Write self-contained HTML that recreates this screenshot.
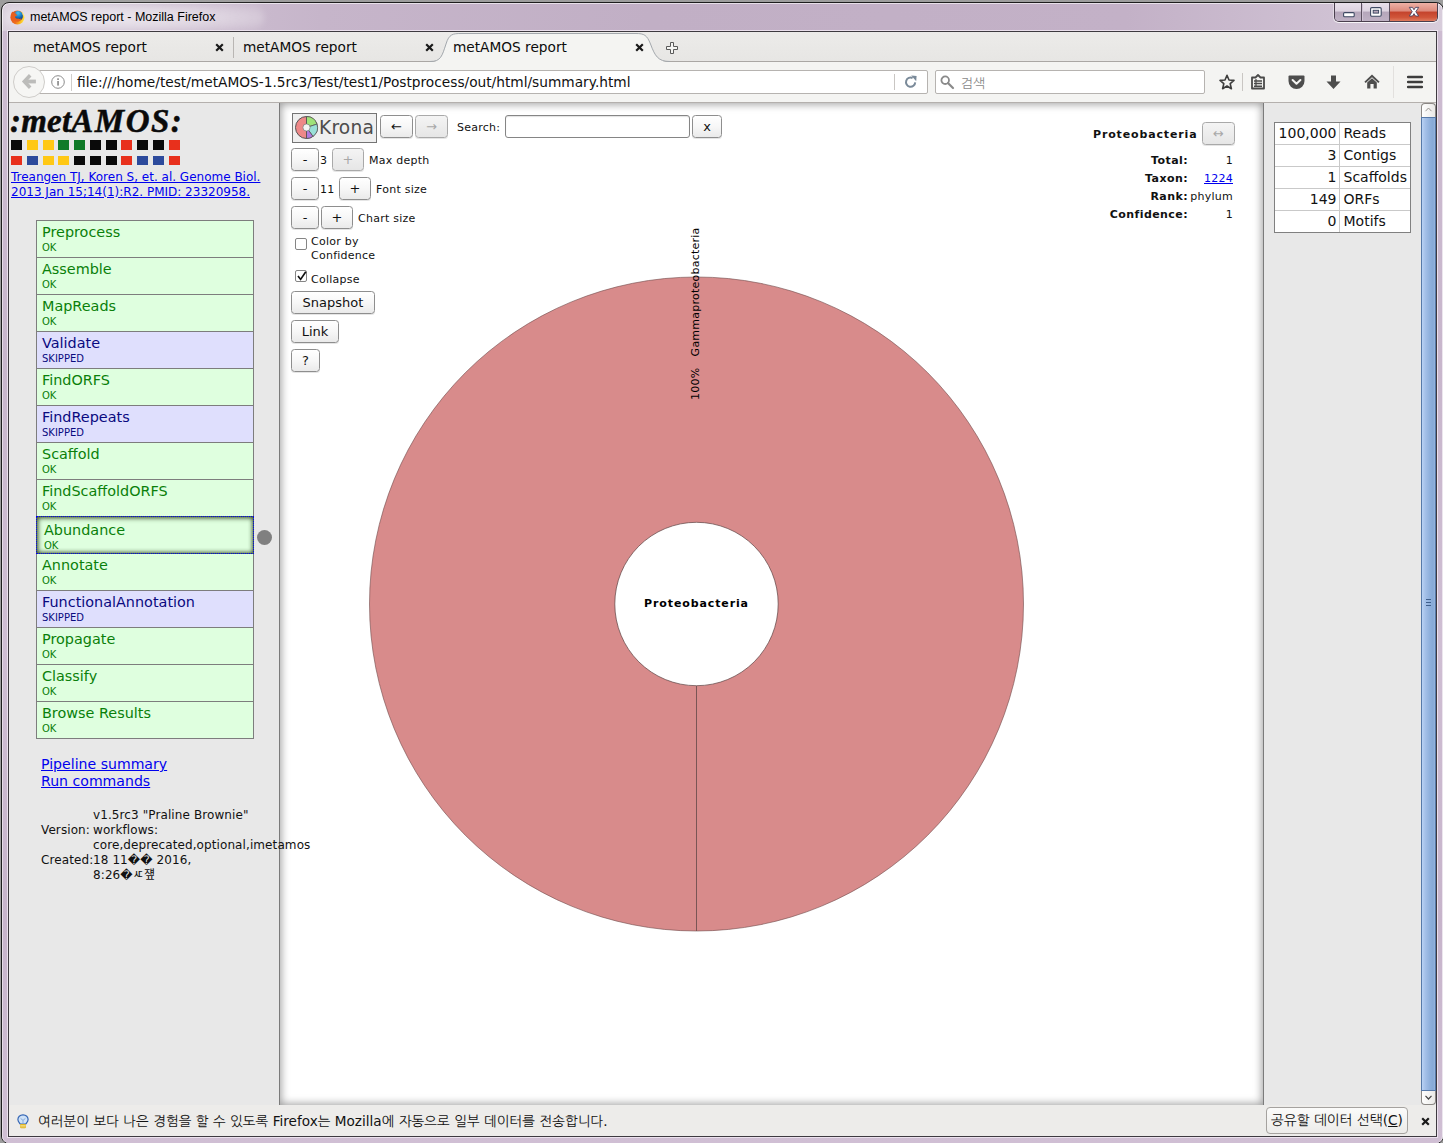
<!DOCTYPE html>
<html lang="ko">
<head>
<meta charset="utf-8">
<title>metAMOS report - Mozilla Firefox</title>
<style>
*{box-sizing:border-box;margin:0;padding:0}
html,body{width:1443px;height:1143px;overflow:hidden;background:#9d9d9d}
body{position:relative;font-family:"DejaVu Sans","Liberation Sans","NanumGothic",sans-serif;color:#000}
.abs{position:absolute}
/* window frame */
#frame{position:absolute;left:1px;top:2px;width:1443px;height:1142px;border:1px solid #1d1d1d;border-radius:8px;
 background:linear-gradient(90deg,#d9cfdc 0,#d2c6d6 60px,#c6b5ca 320px,#c1afc5 45%,#c3b1c7 78%,#d2c5d6 96%,#d8cddb 100%);box-shadow:inset 0 0 0 1px rgba(255,255,255,.6)}
#frameside{position:absolute;left:2px;top:31px;width:1441px;height:1112px;background:linear-gradient(180deg,#cdbcd1 0,#c8b6cc 30%,#cfbed3 55%,#c7b4cb 80%,#d0bfd4 100%);border-left:1px solid #e6dde8;border-right:1px solid #ece6ee;border-radius:0 0 7px 7px}
#titleglow{position:absolute;left:4px;top:4px;width:260px;height:27px;border-radius:14px;background:radial-gradient(ellipse at 45% 50%,rgba(255,255,255,.6) 0,rgba(255,255,255,.42) 45%,rgba(255,255,255,0) 100%);filter:blur(3px)}
#title{position:absolute;left:30px;top:9px;font:12.5px/17px "Liberation Sans","NanumGothic",sans-serif;color:#000;white-space:nowrap}
/* client area */
#client{position:absolute;left:8px;top:31px;width:1429px;height:1106px;border:1px solid #3e3a40;box-shadow:0 0 0 1px rgba(245,238,247,.75);background:#e8e8e8;overflow:hidden}

/* tab bar */
#tabbar{position:absolute;left:9px;top:32px;width:1427px;height:30px;background:linear-gradient(#ecebe9,#e7e6e4);border-bottom:1px solid #aaa7a4}
.tabtxt{position:absolute;top:39px;font-size:13.7px;line-height:17px;white-space:nowrap;color:#0c0c0c}
.tabx{position:absolute;top:43px;width:9px;height:9px}
#tabsep{position:absolute;left:233px;top:37px;width:1px;height:21px;background:#b9b6b3}
/* nav bar */
#navbar{position:absolute;left:9px;top:62px;width:1427px;height:41px;background:#f4f4f2;border-bottom:1px solid #b4b0ad}
#urlbar{position:absolute;left:36px;top:70px;width:892px;height:24px;background:#fff;border:1px solid #b6b3b0;border-radius:2px}
#urltext{position:absolute;left:77px;top:73px;font-size:13.73px;line-height:18px;white-space:nowrap;color:#111}
#backbtn{position:absolute;left:13px;top:65.8px;width:32px;height:32px;border-radius:50%;background:#f6f6f4;border:1px solid #cfcdca}
#searchbar{position:absolute;left:935px;top:70px;width:270px;height:24px;background:#fff;border:1px solid #b6b3b0;border-radius:2px}
#searchph{position:absolute;left:960.5px;top:74.5px;font:13.2px/18px "NanumGothic","Noto Sans CJK KR",sans-serif;color:#8a8a8a}
.vsep{position:absolute;width:1px;background:#c9c6c3}
svg{position:absolute;overflow:visible}

/* page panels */
#leftp{position:absolute;left:9px;top:103px;width:270px;height:1002px;background:#e8e8e8;overflow:hidden}
#div1{position:absolute;left:279px;top:103px;width:1px;height:1002px;background:#7b7b7b}
#centerp{position:absolute;left:280px;top:103px;width:983px;height:1002px;background:#fff;box-shadow:inset 0 0 8px 1px rgba(0,0,0,.40);overflow:hidden}
#div2{position:absolute;left:1263px;top:103px;width:1px;height:1002px;background:#7b7b7b}
#rightp{position:absolute;left:1264px;top:103px;width:157px;height:1002px;background:#e8e8e8}
#logo{position:absolute;left:10px;top:103px;font:italic bold 33px/36px "Liberation Serif","DejaVu Serif",serif;letter-spacing:0.2px;color:#0a0a0a;white-space:nowrap;-webkit-text-stroke:.5px #0a0a0a}
.sq{position:absolute;width:11px;height:10px}
#cite{position:absolute;left:11px;top:170px;font-size:12px;line-height:15px;color:#0000ee;text-decoration:underline;white-space:nowrap}
#steps{position:absolute;left:36px;top:220px;width:218px;height:519px;border:1px solid #7d7d7d;background:#7d7d7d}
.st{position:absolute;left:36px;width:218px;height:38px;border:1px solid #7d7d7d;background:#dfffdf;color:#0a800a}
.st.sk{background:#dfdffd;color:#0a0a80}
.st b{position:absolute;left:5px;top:3px;font-weight:normal;font-size:14.4px;line-height:17px;white-space:nowrap}
.st i{position:absolute;left:5px;top:21px;font-style:normal;font-size:10px;line-height:12px}
.st.sel{outline:1px dotted #0000ee;outline-offset:-1px;border-color:#4a6a4a;box-shadow:inset 1px 1px 5px rgba(20,40,0,.75),inset -1px -1px 4px rgba(20,40,0,.45)}
.st.sel{z-index:2}.st.sel b{left:7px;top:5px}.st.sel i{left:7px;top:23px}
#dot{position:absolute;left:257px;top:530px;width:15px;height:15px;border-radius:50%;background:#808080}
.lnk{position:absolute;left:41px;font-size:14.1px;line-height:17px;color:#0000ee;text-decoration:underline;white-space:nowrap}
.ver{position:absolute;font-family:"DejaVu Sans","Noto Sans CJK KR",sans-serif;letter-spacing:.1px;font-size:12px;line-height:15px;white-space:nowrap;color:#111}

/* krona */
.kb{position:absolute;height:23px;border:1px solid #8e8e8e;border-radius:3.5px;background:linear-gradient(#ffffff,#f7f7f7 50%,#eaeaea);box-shadow:0 1px 0 rgba(0,0,0,.10);font-size:13px;line-height:21px;text-align:center;color:#111}
.kb.dis{color:#a8a8a8;background:linear-gradient(#f4f4f4,#e6e6e6);border-color:#a9a9a9}
.kl{position:absolute;font-size:11px;line-height:14px;white-space:nowrap;color:#111;letter-spacing:.25px}
#kinput{position:absolute;left:505px;top:115px;width:185px;height:23px;border:1px solid #858585;border-radius:3px;background:#fff;box-shadow:inset 0 1px 1px rgba(0,0,0,.12)}
#klogo{position:absolute;left:292px;top:113px;width:85px;height:30px;border:1px solid #747474;background:#efefef}
#klogo span{position:absolute;left:26px;top:2px;font-size:18.6px;line-height:24px;color:#4c4c4c;letter-spacing:.2px}
.cb{position:absolute;left:295px;width:12px;height:12px;border:1px solid #858585;background:#fff;border-radius:2px}
.ib{font-weight:bold;text-align:right;letter-spacing:.42px}
/* right table */
#stats{position:absolute;left:1274px;top:122px;width:137px;height:111px;border:1px solid #808080;background:#fff}
.cell{position:absolute;height:21px;font-size:14px;line-height:21px;white-space:nowrap;color:#111}
/* scrollbar */
#sbar{position:absolute;left:1421px;top:103px;width:15px;height:1002px;background:#e8e8e8}
#sthumb{position:absolute;left:1421px;top:117px;width:15px;height:974px;border:1px solid #5679a8;background:linear-gradient(90deg,#b9d2f4 0,#a4c0e8 25%,#8fb0dc 60%,#86a9d6 85%,#98b6de 100%)}
.sbtn{position:absolute;left:1421px;width:15px;height:14px;border:1px solid #8a8784;background:linear-gradient(90deg,#ffffff,#e9e8e6);}
/* notification */
#notif{position:absolute;left:9px;top:1105px;width:1427px;height:31px;background:#edecea}
#notiftxt{position:absolute;left:38px;top:1111.5px;font:13.6px/18px "DejaVu Sans","NanumGothic",sans-serif;white-space:nowrap;color:#111}
#notifbtn{position:absolute;left:1266px;top:1107px;width:142px;height:27px;border:1px solid #a5a29f;border-radius:4px;background:linear-gradient(#fbfbfa,#ecebe9);font:13.7px/24px "DejaVu Sans","NanumGothic",sans-serif;text-align:center;white-space:nowrap;color:#111}

/* window controls */
#wc{position:absolute;left:1334px;top:3px;width:104px;height:19px;border:1px solid #4a3f4e;border-top:none;border-radius:0 0 5px 5px;overflow:hidden;box-shadow:0 1px 0 rgba(255,255,255,.5),1px 1px 0 rgba(255,255,255,.4),-1px 1px 0 rgba(255,255,255,.4)}
#wc div{position:absolute;top:0;height:18px}
.wcg{background:linear-gradient(#e9e1eb 0,#ddd3e0 45%,#b5a6ba 50%,#bfb1c4 100%)}
#wcx{background:linear-gradient(#eeb1a6 0,#dd8a7c 45%,#c4432c 50%,#d0553a 80%,#de7a5e 100%)}
</style>
</head>
<body>
<div id="frame"></div><div id="frameside"></div>
<div id="titleglow"></div>
<div id="title">metAMOS report - Mozilla Firefox</div>
<div id="client"></div>

<div id="tabbar"></div>
<svg id="acttab" style="left:430px;top:32px" width="245" height="31" viewBox="0 0 245 31">
 <path d="M0 30 C 11 30 12 24 16 12 C 19 2 23 1.5 31 1.5 L 206 1.5 C 214 1.5 217 3 220.5 12 C 225 24 228 30 240 30 L 245 31 L 0 31 Z" fill="#f4f4f2"/>
 <path d="M0 29.5 C 11 29.5 12 24 16 12 C 19 2 23 1.5 31 1.5 L 206 1.5 C 214 1.5 217 3 220.5 12 C 225 24 228 29.5 240 29.5" fill="none" stroke="#a3a8ad" stroke-width="1"/>
</svg>
<div class="tabtxt" style="left:33px">metAMOS report</div>
<div class="tabtxt" style="left:243px">metAMOS report</div>
<div class="tabtxt" style="left:453px">metAMOS report</div>
<svg class="tabx" style="left:215px" viewBox="0 0 9 9"><path d="M1.2 1.2 L7.8 7.8 M7.8 1.2 L1.2 7.8" stroke="#1a1a1a" stroke-width="2.2" stroke-linecap="butt"/></svg>
<svg class="tabx" style="left:425px" viewBox="0 0 9 9"><path d="M1.2 1.2 L7.8 7.8 M7.8 1.2 L1.2 7.8" stroke="#1a1a1a" stroke-width="2.2"/></svg>
<svg class="tabx" style="left:635px" viewBox="0 0 9 9"><path d="M1.2 1.2 L7.8 7.8 M7.8 1.2 L1.2 7.8" stroke="#1a1a1a" stroke-width="2.2"/></svg>
<div id="tabsep"></div>
<svg style="left:666px;top:42px" width="12" height="12" viewBox="0 0 12 12"><path d="M4.5 .5 H7.5 V4.5 H11.5 V7.5 H7.5 V11.5 H4.5 V7.5 H.5 V4.5 H4.5 Z" fill="#f6f6f4" stroke="#5a5a5a" stroke-width="1"/></svg>

<div id="navbar"></div>
<div id="urlbar"></div>
<div id="backbtn"></div>
<svg style="left:22px;top:74.3px" width="14" height="15" viewBox="0 0 14 15"><path d="M8.2 1.2 L2.3 7.5 L8.2 13.8" fill="none" stroke="#bcbcba" stroke-width="3.5" stroke-linejoin="miter"/><path d="M3.4 7.5 H13.9" stroke="#bcbcba" stroke-width="3.8"/></svg>
<svg style="left:51px;top:75px" width="14" height="14" viewBox="0 0 14 14"><circle cx="7" cy="7" r="6.3" fill="none" stroke="#8c8c8c" stroke-width="1"/><rect x="6.2" y="6" width="1.7" height="4.6" fill="#8c8c8c"/><rect x="6.2" y="3.3" width="1.7" height="1.7" fill="#8c8c8c"/></svg>
<div class="vsep" style="left:71px;top:74px;height:17px;background:#d0cecb"></div>
<div id="urltext">file:///home/test/metAMOS-1.5rc3/Test/test1/Postprocess/out/html/summary.html</div>
<div class="vsep" style="left:894px;top:74px;height:16px"></div>
<svg style="left:904px;top:75px" width="14" height="14" viewBox="0 0 14 14"><path d="M11.2 7.4 A4.6 4.6 0 1 1 8.6 3.0" fill="none" stroke="#7a8a99" stroke-width="2"/><path d="M7.2 0.6 L12.6 1.0 L12.2 6.2 Z" fill="#7a8a99"/></svg>
<div id="searchbar"></div>
<svg style="left:940px;top:75px" width="14" height="14" viewBox="0 0 14 14"><circle cx="5.2" cy="5.2" r="3.8" fill="none" stroke="#8a8a8a" stroke-width="1.8"/><path d="M8 8 L13 13" stroke="#8a8a8a" stroke-width="2.2" stroke-linecap="round"/></svg>
<div id="searchph">검색</div>
<!-- toolbar icons -->
<svg style="left:1219px;top:74px" width="16" height="16" viewBox="0 0 16 16"><path d="M8 1.3 L10 6 L15 6.4 L11.2 9.7 L12.4 14.7 L8 12 L3.6 14.7 L4.8 9.7 L1 6.4 L6 6 Z" fill="none" stroke="#3d3d3d" stroke-width="1.6" stroke-linejoin="round"/></svg>
<div class="vsep" style="left:1242px;top:73px;height:18px"></div>
<svg style="left:1251px;top:74px" width="14" height="16" viewBox="0 0 14 16"><path d="M1 3.5 H4.5 L7 1 L9.5 3.5 H13 V14.5 H1 Z" fill="none" stroke="#4a4a4a" stroke-width="1.8" stroke-linejoin="round"/><path d="M3 7 H11 M3 9.6 H11 M3 12.2 H11" stroke="#4a4a4a" stroke-width="1.5"/><path d="M5 5 V13" stroke="#4a4a4a" stroke-width="1.2"/></svg>
<svg style="left:1288px;top:75px" width="17" height="15" viewBox="0 0 17 15"><path d="M1.5 0.5 H15.5 Q16.5 0.5 16.5 1.5 V6 A8 8 0 0 1 0.5 6 V1.5 Q0.5 0.5 1.5 0.5 Z" fill="#4d4d4d"/><path d="M4.6 5 L8.5 8.8 L12.4 5" fill="none" stroke="#f4f4f2" stroke-width="2" stroke-linecap="round" stroke-linejoin="round"/></svg>
<svg style="left:1326px;top:75px" width="15" height="15" viewBox="0 0 15 15"><path d="M5 0.5 H10 V6.5 H14.5 L7.5 14 L0.5 6.5 H5 Z" fill="#4d4d4d"/></svg>
<svg style="left:1364px;top:74px" width="16" height="15" viewBox="0 0 16 15"><path d="M8 0.6 L0.4 7.8 L1.7 9 L8 3.2 L14.3 9 L15.6 7.8 Z" fill="#4d4d4d"/><path d="M3.2 8.6 L8 4.3 L12.8 8.6 V14.6 H9.6 V10 H6.4 V14.6 H3.2 Z" fill="#4d4d4d"/></svg>
<div class="vsep" style="left:1393px;top:66px;height:32px;background:#e2e0de"></div>
<svg style="left:1407px;top:75px" width="16" height="14" viewBox="0 0 16 14"><path d="M1.2 2 H14.8 M1.2 7 H14.8 M1.2 12 H14.8" stroke="#3d3d3d" stroke-width="2.6" stroke-linecap="round"/></svg>


<div id="leftp"></div><div id="div1"></div><div id="centerp"></div><div id="div2"></div><div id="rightp"></div>
<div id="logo">:met<span style="letter-spacing:1.5px">AMOS:</span></div>
<div class="sq" style="left:11.00px;top:140px;background:#0a0a0a"></div><div class="sq" style="left:26.75px;top:140px;background:#ffc814"></div><div class="sq" style="left:42.50px;top:140px;background:#ffc814"></div><div class="sq" style="left:58.25px;top:140px;background:#0f7a28"></div><div class="sq" style="left:74.00px;top:140px;background:#0f7a28"></div><div class="sq" style="left:89.75px;top:140px;background:#0a0a0a"></div><div class="sq" style="left:105.50px;top:140px;background:#0a0a0a"></div><div class="sq" style="left:121.25px;top:140px;background:#e8301c"></div><div class="sq" style="left:137.00px;top:140px;background:#0a0a0a"></div><div class="sq" style="left:152.75px;top:140px;background:#0a0a0a"></div><div class="sq" style="left:168.50px;top:140px;background:#e8301c"></div><div class="sq" style="left:11.00px;top:155.6px;height:9.6px;background:#e8301c"></div><div class="sq" style="left:26.75px;top:155.6px;height:9.6px;background:#2c4a9c"></div><div class="sq" style="left:42.50px;top:155.6px;height:9.6px;background:#ffc814"></div><div class="sq" style="left:58.25px;top:155.6px;height:9.6px;background:#ffc814"></div><div class="sq" style="left:74.00px;top:155.6px;height:9.6px;background:#0a0a0a"></div><div class="sq" style="left:89.75px;top:155.6px;height:9.6px;background:#0a0a0a"></div><div class="sq" style="left:105.50px;top:155.6px;height:9.6px;background:#0a0a0a"></div><div class="sq" style="left:121.25px;top:155.6px;height:9.6px;background:#e8301c"></div><div class="sq" style="left:137.00px;top:155.6px;height:9.6px;background:#2c4a9c"></div><div class="sq" style="left:152.75px;top:155.6px;height:9.6px;background:#2c4a9c"></div><div class="sq" style="left:168.50px;top:155.6px;height:9.6px;background:#e8301c"></div>
<div id="cite">Treangen TJ, Koren S, et. al. Genome Biol.<br>2013 Jan 15;14(1):R2. PMID: 23320958.</div>
<div class="st" style="top:220px"><b>Preprocess</b><i>OK</i></div>
<div class="st" style="top:257px"><b>Assemble</b><i>OK</i></div>
<div class="st" style="top:294px"><b>MapReads</b><i>OK</i></div>
<div class="st sk" style="top:331px"><b>Validate</b><i>SKIPPED</i></div>
<div class="st" style="top:368px"><b>FindORFS</b><i>OK</i></div>
<div class="st sk" style="top:405px"><b>FindRepeats</b><i>SKIPPED</i></div>
<div class="st" style="top:442px"><b>Scaffold</b><i>OK</i></div>
<div class="st" style="top:479px"><b>FindScaffoldORFS</b><i>OK</i></div>
<div class="st sel" style="top:516px"><b>Abundance</b><i>OK</i></div>
<div class="st" style="top:553px"><b>Annotate</b><i>OK</i></div>
<div class="st sk" style="top:590px"><b>FunctionalAnnotation</b><i>SKIPPED</i></div>
<div class="st" style="top:627px"><b>Propagate</b><i>OK</i></div>
<div class="st" style="top:664px"><b>Classify</b><i>OK</i></div>
<div class="st" style="top:701px"><b>Browse Results</b><i>OK</i></div>

<div id="dot"></div>
<div class="lnk" style="top:756px">Pipeline summary</div>
<div class="lnk" style="top:773px">Run commands</div>
<div class="ver" style="left:41px;top:823px">Version:</div>
<div class="ver" style="left:93px;top:808px">v1.5rc3 "Praline Brownie"<br>workflows:<br>core,deprecated,optional,imetamos</div>
<div class="ver" style="left:41px;top:853px">Created:</div>
<div class="ver" style="left:93px;top:853px">18 11�� 2016,<br>8:26�ㅼ쟾</div>

<!-- krona controls -->
<div id="klogo"><span>Krona</span></div>
<svg style="left:295.1px;top:116.4px" width="23" height="23" viewBox="-11.5 -11.5 23 23">
 <circle r="11" fill="#e88" stroke="#555" stroke-width="1"/>
 <path d="M0 0 L0 -11 A11 11 0 0 1 10.46 -3.4 Z" fill="#9fe27a" stroke="#555" stroke-width=".8"/>
 <path d="M0 0 L10.46 -3.4 A11 11 0 0 1 6.47 8.9 Z" fill="#9adfd8" stroke="#555" stroke-width=".8"/>
 <path d="M0 0 L6.47 8.9 A11 11 0 0 1 0 11 Z" fill="#b07ae0" stroke="#555" stroke-width=".8"/>
 <path d="M0 -11 V11" stroke="#555" stroke-width=".8"/>
 <circle r="3.6" fill="#f4f4f4" stroke="#777" stroke-width=".7"/>
</svg>
<div class="kb" style="left:380px;top:115px;width:33px">&#8592;</div>
<div class="kb dis" style="left:415px;top:115px;width:33px">&#8594;</div>
<div class="kl" style="left:457px;top:121px">Search:</div>
<div id="kinput"></div>
<div class="kb" style="left:692px;top:115px;width:30px">x</div>
<div class="kb" style="left:291px;top:148px;width:28px">-</div>
<div class="kl" style="left:320px;top:154px">3</div>
<div class="kb dis" style="left:332px;top:148px;width:32px">+</div>
<div class="kl" style="left:369px;top:154px">Max depth</div>
<div class="kb" style="left:291px;top:177px;width:28px">-</div>
<div class="kl" style="left:320px;top:183px">11</div>
<div class="kb" style="left:339px;top:177px;width:32px">+</div>
<div class="kl" style="left:376px;top:183px">Font size</div>
<div class="kb" style="left:291px;top:206px;width:28px">-</div>
<div class="kb" style="left:321px;top:206px;width:32px">+</div>
<div class="kl" style="left:358px;top:212px">Chart size</div>
<div class="cb" style="top:238px"></div>
<div class="kl" style="left:311px;top:235px">Color by<br>Confidence</div>
<div class="cb" style="top:270px"></div>
<svg style="left:296.5px;top:270.5px" width="10" height="10" viewBox="0 0 10 10"><path d="M1 5 L3.6 8.4 L8.8 .8" fill="none" stroke="#111" stroke-width="1.7"/></svg>
<div class="kl" style="left:311px;top:273px">Collapse</div>
<div class="kb" style="left:291px;top:291px;width:84px">Snapshot</div>
<div class="kb" style="left:291px;top:320px;width:48px">Link</div>
<div class="kb" style="left:291px;top:349px;width:29px">?</div>
<!-- info panel -->
<div class="kl ib" style="left:1040px;top:128px;width:157.5px;letter-spacing:.86px">Proteobacteria</div>
<div class="kb dis" style="left:1202px;top:122px;width:33px">&#8596;</div>
<div class="kl ib" style="left:1040px;top:154px;width:148px">Total:</div><div class="kl" style="left:1190px;top:154px;width:43px;text-align:right">1</div>
<div class="kl ib" style="left:1040px;top:172px;width:148px">Taxon:</div><div class="kl" style="left:1190px;top:172px;width:43px;text-align:right;color:#0000ee;text-decoration:underline">1224</div>
<div class="kl ib" style="left:1040px;top:190px;width:148px">Rank:</div><div class="kl" style="left:1180px;top:190px;width:53px;text-align:right">phylum</div>
<div class="kl ib" style="left:1040px;top:208px;width:148px">Confidence:</div><div class="kl" style="left:1190px;top:208px;width:43px;text-align:right">1</div>
<!-- chart -->
<svg style="left:280px;top:103px" width="983" height="1002" viewBox="280 103 983 1002">
 <circle cx="696.5" cy="604" r="327" fill="#d88b8b" stroke="#6e4a4a" stroke-width=".6"/>
 <circle cx="696.5" cy="604" r="81.7" fill="#fff" stroke="#5a4040" stroke-width=".7"/>
 <path d="M696.5 686 V931" stroke="#7a5555" stroke-width="1"/>
 <text x="696.5" y="607.3" text-anchor="middle" font-family="DejaVu Sans, sans-serif" font-weight="bold" font-size="11" letter-spacing=".88">Proteobacteria</text>
 <text transform="translate(698.7 400) rotate(-90)" font-family="DejaVu Sans, sans-serif" font-size="11" letter-spacing=".24" xml:space="preserve">100%   Gammaproteobacteria</text>
</svg>
<!-- right table -->
<div id="stats"></div>
<div class="cell" style="left:1275px;top:123px;width:61.5px;text-align:right">100,000</div><div class="cell" style="left:1343.5px;top:123px">Reads</div>
<div class="cell" style="left:1275px;top:145px;width:61.5px;text-align:right">3</div><div class="cell" style="left:1343.5px;top:145px">Contigs</div>
<div class="abs" style="left:1275px;top:144px;width:135px;height:1px;background:#c9c9c9"></div>
<div class="cell" style="left:1275px;top:167px;width:61.5px;text-align:right">1</div><div class="cell" style="left:1343.5px;top:167px">Scaffolds</div>
<div class="abs" style="left:1275px;top:166px;width:135px;height:1px;background:#c9c9c9"></div>
<div class="cell" style="left:1275px;top:189px;width:61.5px;text-align:right">149</div><div class="cell" style="left:1343.5px;top:189px">ORFs</div>
<div class="abs" style="left:1275px;top:188px;width:135px;height:1px;background:#c9c9c9"></div>
<div class="cell" style="left:1275px;top:211px;width:61.5px;text-align:right">0</div><div class="cell" style="left:1343.5px;top:211px">Motifs</div>
<div class="abs" style="left:1275px;top:210px;width:135px;height:1px;background:#c9c9c9"></div>
<div class="abs" style="left:1339px;top:123px;width:1px;height:109px;background:#c9c9c9"></div>
<!-- scrollbar -->
<div id="sbar"></div>
<div class="sbtn" style="top:103px;border-radius:4px 4px 0 0;border-bottom:none"></div>
<svg style="left:1425px;top:107px" width="7" height="5" viewBox="0 0 7 5"><path d="M.5 4.2 L3.5 1 L6.5 4.2" fill="none" stroke="#9a9693" stroke-width="1"/></svg>
<div id="sthumb"></div>
<div class="abs" style="left:1426px;top:599px;width:5px;height:1px;background:#3f5f8c"></div>
<div class="abs" style="left:1426px;top:602px;width:5px;height:1px;background:#3f5f8c"></div>
<div class="abs" style="left:1426px;top:605px;width:5px;height:1px;background:#3f5f8c"></div>
<div class="sbtn" style="top:1091px;border-radius:0 0 4px 4px;border-top:none"></div>
<svg style="left:1425px;top:1095px" width="7" height="5" viewBox="0 0 7 5"><path d="M.5 .8 L3.5 4 L6.5 .8" fill="none" stroke="#444" stroke-width="1.2"/></svg>
<!-- notification bar -->
<div id="notif"></div>
<svg style="left:17px;top:1113.5px" width="12" height="15" viewBox="0 0 12 15">
 <path d="M6 .8 C2.8 .8 .9 3 .9 5.4 C.9 7.4 2.4 8.6 3.2 10 H8.8 C9.6 8.6 11.1 7.4 11.1 5.4 C11.1 3 9.2 .8 6 .8 Z" fill="#cfe2f7" stroke="#3465b4" stroke-width="1.2"/>
 <path d="M3.6 4.4 L6 6.4 L8.4 4.4 M6 6.4 V9.6" fill="none" stroke="#7ea4d8" stroke-width=".9"/>
 <rect x="3" y="10" width="6" height="4.2" rx="1.2" fill="#d8a80c"/>
 <path d="M3.2 11.3 H8.8 M3.2 12.9 H8.8" stroke="#fff2b0" stroke-width=".8"/>
</svg>
<div id="notiftxt">여러분이 보다 나은 경험을 할 수 있도록 Firefox는 Mozilla에 자동으로 일부 데이터를 전송합니다.</div>
<div id="notifbtn">공유할 데이터 선택(<u>C</u>)</div>
<svg style="left:1420.5px;top:1116.5px" width="9" height="9" viewBox="0 0 9 9"><path d="M1.2 1.2 L7.8 7.8 M7.8 1.2 L1.2 7.8" stroke="#1a1a1a" stroke-width="2.2"/></svg>

<div id="wc"><div class="wcg" style="left:0;width:27px;border-right:1px solid #5a4f5e"></div><div class="wcg" style="left:28px;width:27px;border-right:1px solid #5a4f5e"></div><div id="wcx" style="left:55px;width:48px"></div></div>
<svg style="left:1343px;top:11.5px" width="12" height="6" viewBox="0 0 12 6"><rect x=".6" y=".6" width="10.6" height="4.2" rx="1" fill="#fff" stroke="#3f4a63" stroke-width="1.1"/></svg>
<svg style="left:1370px;top:7px" width="12" height="10" viewBox="0 0 12 10"><rect x=".6" y=".6" width="10.6" height="8.6" rx="1.2" fill="#fff" stroke="#3f4a63" stroke-width="1.1"/><rect x="3.2" y="3.3" width="5.4" height="2.8" fill="#b5a6ba" stroke="#3f4a63" stroke-width="1"/></svg>
<svg style="left:1408.5px;top:7.1px" width="10" height="9.4" viewBox="0 0 10 9.3"><path d="M.3 .3 H3.5 L5 2.7 L6.5 .3 H9.7 L6.8 4.65 L9.7 9 H6.5 L5 6.6 L3.5 9 H.3 L3.2 4.65 Z" fill="#fff" stroke="#47405e" stroke-width=".9" stroke-linejoin="round"/></svg>
<!-- firefox icon -->
<svg style="left:9.6px;top:9.7px" width="15" height="15" viewBox="0 0 15 15">
 <defs><radialGradient id="ffb" cx=".5" cy=".2" r=".8"><stop offset="0" stop-color="#4fc0ee"/><stop offset=".45" stop-color="#1a84cc"/><stop offset="1" stop-color="#0a2470"/></radialGradient>
 <linearGradient id="ffo" x1="0" y1=".2" x2="1" y2=".5"><stop offset="0" stop-color="#e4521c"/><stop offset=".5" stop-color="#ee6c1c"/><stop offset=".8" stop-color="#f8b41c"/><stop offset="1" stop-color="#ffe040"/></linearGradient></defs>
 <circle cx="7.4" cy="7.5" r="7" fill="url(#ffo)"/>
 <circle cx="8" cy="6" r="4.9" fill="url(#ffb)"/>
 <path d="M.9 4.6 C1.2 3.2 1.8 2.2 2.6 1.6 C2.8 2.4 3.2 2.8 3.8 3 C4.4 2.6 5.2 2.4 5.8 2.6 C5.4 3.2 5.4 3.8 5.9 4.2 C6.8 4.3 7.4 4.7 7.1 5.5 C6.4 5.9 5.5 5.9 5.1 6.7 C5.2 8.2 6.6 9 8.2 8.6 C9.4 9.2 10.6 8.8 11.4 8 C11 10.4 9.4 11.8 7.4 11.8 C4 11.8 1 9 .9 4.6 Z" fill="#ea601c"/>
 <path d="M11.6 1.8 C13.6 3.2 14.6 5.4 14.4 7.8 C14 6 13.2 5 12.4 4.6 C12.6 3.6 12.2 2.6 11.6 1.8 Z" fill="#fff0a0" opacity=".8"/>
</svg>
</body>
</html>
